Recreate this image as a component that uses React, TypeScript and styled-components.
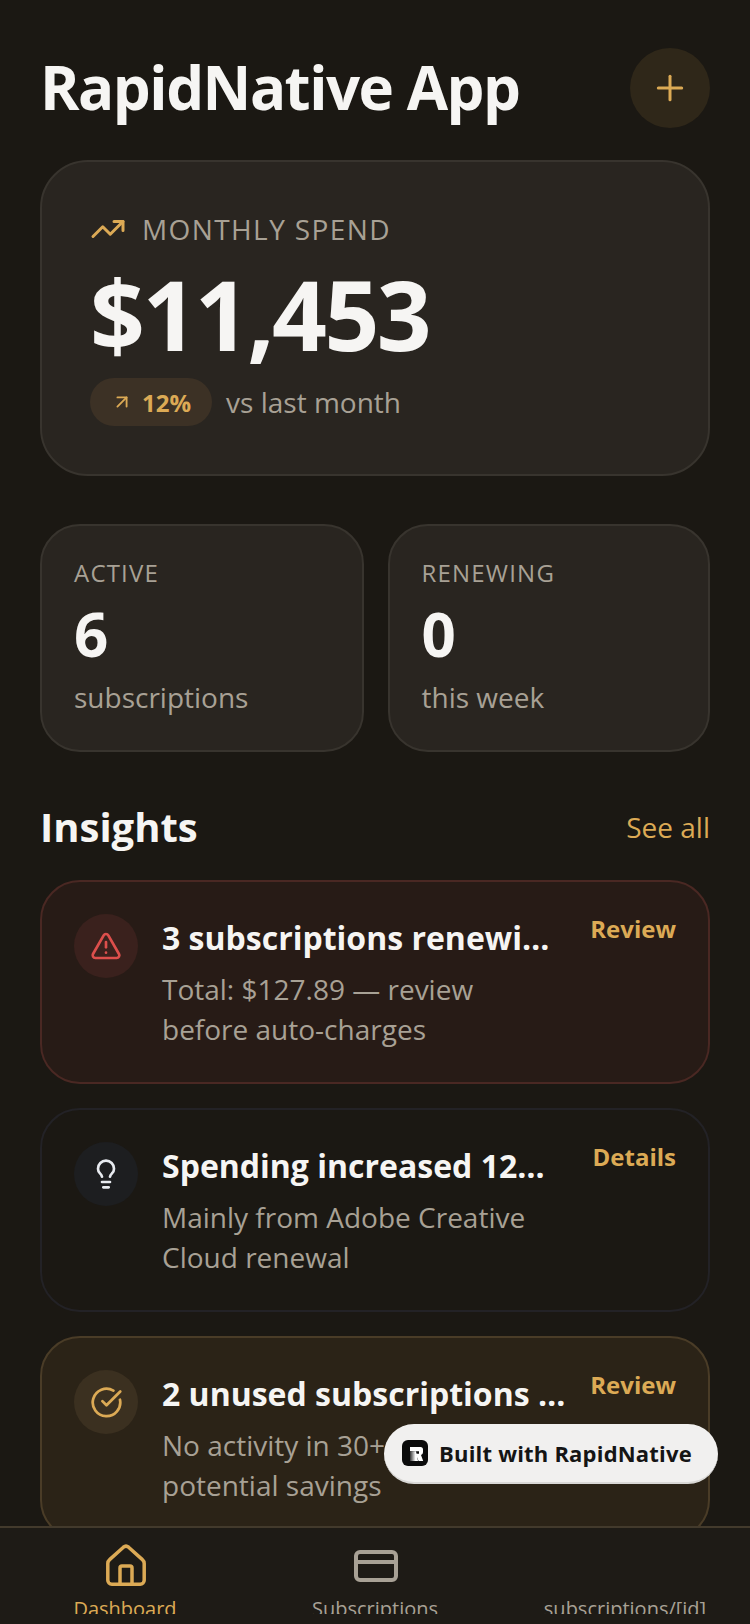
import React from 'react';
import styled, { createGlobalStyle } from 'styled-components';
import {
  ArrowUpRight,
  CircleCheckBig,
  CreditCard,
  Lightbulb,
  Plus,
  TrendingUp,
  TriangleAlert,
} from 'lucide-react';

type Tone = 'danger' | 'info' | 'warning';

const BG = '#1b1813';
const GOLD = '#dcaa55';
const MUTED = '#a8a195';
const WHITE = '#f6f5f3';
const CARD = '#292520';
const CARD_BORDER = '#38342e';

const toneStyles: Record<Tone, { bg: string; border: string; circle: string; icon: string }> = {
  danger: { bg: '#271b16', border: '#4a2823', circle: '#3a211d', icon: '#dc4f4c' },
  info: { bg: BG, border: '#232226', circle: '#1d1e20', icon: '#e8ebf0' },
  warning: { bg: '#2b2317', border: '#4a3c27', circle: '#3b3020', icon: GOLD },
};

const GlobalStyle = createGlobalStyle`
  html, body {
    margin: 0;
    padding: 0;
    background: ${BG};
  }
  * {
    box-sizing: border-box;
  }
`;

const Screen = styled.div`
  width: 750px;
  height: 1624px;
  display: flex;
  flex-direction: column;
  position: relative;
  overflow: hidden;
  background: ${BG};
  font-family: 'Open Sans', sans-serif;
  color: ${WHITE};
`;

const Scroll = styled.main`
  flex: 1;
  min-height: 0;
  overflow: hidden;
  padding: 48px 40px 0;
`;

const Header = styled.header`
  display: flex;
  justify-content: space-between;
  align-items: center;
  margin-bottom: 32px;
`;

const Title = styled.h1`
  margin: -3px 0 0;
  font-size: 60px;
  line-height: 80px;
  font-weight: 700;
  letter-spacing: -1.5px;
`;

const AddButton = styled.button`
  width: 80px;
  height: 80px;
  border: none;
  border-radius: 50%;
  background: #2f2719;
  color: ${GOLD};
  display: flex;
  align-items: center;
  justify-content: center;
  padding: 0;
`;

const SpendCard = styled.section`
  height: 316px;
  padding: 47px 48px;
  background: ${CARD};
  border: 2px solid ${CARD_BORDER};
  border-radius: 48px;
  margin-bottom: 48px;
`;

const SpendLabelRow = styled.div`
  display: flex;
  align-items: center;
  gap: 16px;
  color: ${GOLD};
`;

const SpendLabel = styled.span`
  font-size: 28px;
  line-height: 40px;
  letter-spacing: 1.4px;
  color: ${MUTED};
`;

const Amount = styled.div`
  font-size: 96px;
  line-height: 112px;
  font-weight: 700;
  letter-spacing: -2.5px;
  margin-top: 9px;
`;

const TrendRow = styled.div`
  display: flex;
  align-items: center;
  gap: 14px;
  margin-top: 8px;
`;

const TrendPill = styled.div`
  display: flex;
  align-items: center;
  gap: 9px;
  height: 48px;
  padding: 0 21px;
  border-radius: 24px;
  background: #3c3125;
  color: ${GOLD};
  font-size: 24px;
  font-weight: 700;
`;

const TrendNote = styled.span`
  font-size: 28px;
  color: ${MUTED};
`;

const StatGrid = styled.div`
  display: grid;
  grid-template-columns: 323.5px 1fr;
  gap: 24px;
  margin-bottom: 47px;
`;

const StatCard = styled.div`
  height: 228px;
  padding: 30px 32px;
  background: ${CARD};
  border: 2px solid ${CARD_BORDER};
  border-radius: 40px;
`;

const StatLabel = styled.div`
  font-size: 24px;
  line-height: 34px;
  letter-spacing: 1.2px;
  color: ${MUTED};
`;

const StatValue = styled.div`
  font-size: 60px;
  line-height: 80px;
  font-weight: 700;
  margin-top: 4px;
`;

const StatNote = styled.div`
  font-size: 28px;
  line-height: 40px;
  color: ${MUTED};
  margin-top: 3px;
`;

const SectionHeader = styled.div`
  display: flex;
  justify-content: space-between;
  align-items: center;
  margin-bottom: 25px;
`;

const SectionTitle = styled.h2`
  margin: 0;
  font-size: 40px;
  line-height: 56px;
  font-weight: 700;
`;

const SeeAll = styled.span`
  font-size: 28px;
  color: ${GOLD};
`;

const InsightList = styled.div`
  display: flex;
  flex-direction: column;
  gap: 24px;
`;

const InsightCard = styled.article<{ $tone: Tone }>`
  display: flex;
  align-items: flex-start;
  gap: 24px;
  height: 204px;
  flex-shrink: 0;
  padding: 32px;
  background: ${(p) => toneStyles[p.$tone].bg};
  border: 2px solid ${(p) => toneStyles[p.$tone].border};
  border-radius: 40px;
`;

const IconCircle = styled.div<{ $tone: Tone }>`
  width: 64px;
  height: 64px;
  flex-shrink: 0;
  border-radius: 50%;
  display: flex;
  align-items: center;
  justify-content: center;
  background: ${(p) => toneStyles[p.$tone].circle};
  color: ${(p) => toneStyles[p.$tone].icon};
`;

const InsightBody = styled.div`
  flex: 1;
  min-width: 0;
`;

const InsightTitle = styled.div`
  font-size: 32px;
  line-height: 44px;
  font-weight: 700;
  margin-top: 2px;
  white-space: nowrap;
  overflow: hidden;
  text-overflow: ellipsis;
`;

const InsightText = styled.div`
  font-size: 28px;
  line-height: 40px;
  color: ${MUTED};
  margin-top: 9px;
`;

const InsightAction = styled.span`
  font-size: 24px;
  line-height: 30px;
  font-weight: 700;
  color: ${GOLD};
  flex-shrink: 0;
`;

const TabBar = styled.nav`
  height: 98px;
  flex-shrink: 0;
  display: grid;
  grid-template-columns: repeat(3, 1fr);
  background: #1e1b16;
  border-top: 2px solid #433a2c;
`;

const Tab = styled.div<{ $active?: boolean }>`
  display: flex;
  flex-direction: column;
  align-items: center;
  height: 86px;
  overflow: hidden;
  padding-top: 14px;
  color: ${(p) => (p.$active ? GOLD : MUTED)};
`;

const TabIcon = styled.div`
  width: 48px;
  height: 48px;
  flex-shrink: 0;
  margin-left: 2px;
  display: flex;
  align-items: center;
  justify-content: center;
`;

const TabLabel = styled.span`
  font-size: 20px;
  line-height: 28px;
  margin-top: 5px;
  white-space: nowrap;
`;

const BuiltBadge = styled.div`
  position: absolute;
  left: 384px;
  top: 1424px;
  width: 334px;
  height: 60px;
  display: flex;
  align-items: center;
  gap: 11px;
  padding-left: 18px;
  border-radius: 30px;
  background: #f1f0ef;
  border-bottom: 2px solid #d9d8d6;
  color: #151515;
  font-size: 22px;
  font-weight: 700;
  letter-spacing: 0.2px;
`;

const BadgeLogo = styled.div`
  width: 26px;
  height: 26px;
  border-radius: 6px;
  background: #0b0b0b;
  display: flex;
  align-items: center;
  justify-content: center;
`;

const HomeIcon: React.FC = () => (
  <svg width="48" height="48" viewBox="0 0 24 24" fill="none" stroke="currentColor" strokeWidth="1.75" strokeLinejoin="round">
    <path d="M2.9 10.8c0-.8.3-1.5.9-2l6.9-6.2a2 2 0 0 1 2.6 0l6.9 6.2c.6.5.9 1.2.9 2v8.3a2 2 0 0 1-2 2H4.9a2 2 0 0 1-2-2z" />
    <path d="M9 21v-8a1 1 0 0 1 1-1h4a1 1 0 0 1 1 1v8" />
  </svg>
);

const RapidLogo: React.FC = () => (
  <svg width="26" height="26" viewBox="0 0 26 26">
    <defs>
      <linearGradient id="rapid-fade" x1="0" y1="0" x2="1" y2="0">
        <stop offset="0" stopColor="#333" />
        <stop offset="0.7" stopColor="#fff" />
      </linearGradient>
    </defs>
    <path d="M8 7h10.5Q21 7 21 9.5v2.8q0 2-2 2.6l2.2 6.1h-4.6l-3-7.2H17v-2.6H8z" fill="#fff" />
    <path d="M8 11.2h6l2 9.8H8z" fill="url(#rapid-fade)" />
  </svg>
);

const insights: { tone: Tone; icon: React.ReactNode; title: string; text: string; action: string }[] = [
  {
    tone: 'danger',
    icon: <TriangleAlert size={32} strokeWidth={2} />,
    title: '3 subscriptions renewing soon',
    text: 'Total: $127.89 — review before auto-charges',
    action: 'Review',
  },
  {
    tone: 'info',
    icon: <Lightbulb size={32} strokeWidth={2} />,
    title: 'Spending increased 12% this month',
    text: 'Mainly from Adobe Creative Cloud renewal',
    action: 'Details',
  },
  {
    tone: 'warning',
    icon: <CircleCheckBig size={33} strokeWidth={2} />,
    title: '2 unused subscriptions detected',
    text: 'No activity in 30+ days — potential savings',
    action: 'Review',
  },
];

const App: React.FC = () => (
  <Screen>
    <GlobalStyle />
    <Scroll>
      <Header>
        <Title>RapidNative App</Title>
        <AddButton aria-label="Add">
          <Plus size={40} strokeWidth={1.8} />
        </AddButton>
      </Header>

      <SpendCard>
        <SpendLabelRow>
          <TrendingUp size={36} strokeWidth={2} />
          <SpendLabel>MONTHLY SPEND</SpendLabel>
        </SpendLabelRow>
        <Amount>$11,453</Amount>
        <TrendRow>
          <TrendPill>
            <ArrowUpRight size={22} strokeWidth={2} />
            12%
          </TrendPill>
          <TrendNote>vs last month</TrendNote>
        </TrendRow>
      </SpendCard>

      <StatGrid>
        <StatCard>
          <StatLabel>ACTIVE</StatLabel>
          <StatValue>6</StatValue>
          <StatNote>subscriptions</StatNote>
        </StatCard>
        <StatCard>
          <StatLabel>RENEWING</StatLabel>
          <StatValue>0</StatValue>
          <StatNote>this week</StatNote>
        </StatCard>
      </StatGrid>

      <SectionHeader>
        <SectionTitle>Insights</SectionTitle>
        <SeeAll>See all</SeeAll>
      </SectionHeader>

      <InsightList>
        {insights.map((item) => (
          <InsightCard key={item.title} $tone={item.tone}>
            <IconCircle $tone={item.tone}>{item.icon}</IconCircle>
            <InsightBody>
              <InsightTitle>{item.title}</InsightTitle>
              <InsightText>{item.text}</InsightText>
            </InsightBody>
            <InsightAction>{item.action}</InsightAction>
          </InsightCard>
        ))}
      </InsightList>
    </Scroll>

    <TabBar>
      <Tab $active>
        <TabIcon>
          <HomeIcon />
        </TabIcon>
        <TabLabel>Dashboard</TabLabel>
      </Tab>
      <Tab>
        <TabIcon>
          <CreditCard size={48} strokeWidth={2} />
        </TabIcon>
        <TabLabel>Subscriptions</TabLabel>
      </Tab>
      <Tab>
        <TabIcon />
        <TabLabel>subscriptions/[id]</TabLabel>
      </Tab>
    </TabBar>

    <BuiltBadge>
      <BadgeLogo>
        <RapidLogo />
      </BadgeLogo>
      Built with RapidNative
    </BuiltBadge>
  </Screen>
);

export default App;
